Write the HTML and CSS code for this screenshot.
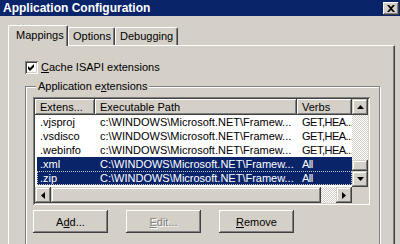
FILE: index.html
```html
<!DOCTYPE html>
<html>
<head>
<meta charset="utf-8">
<link rel="stylesheet" href="styles.css">
</head>
<body>
<div class="titlebar">
  <span class="title">Application Configuration</span>
  <span class="close"><svg width="8" height="7" viewBox="0 0 8 7"><path d="M0 0h2l2 2 2-2h2L5 3.5 8 7H6L4 5 2 7H0l3-3.5z" fill="#000"/></svg></span>
</div>
<div class="content">
  <div class="tabs">
    <div class="tab active t1">Mappings</div>
    <div class="tab t2">Options</div>
    <div class="tab t3">Debugging</div>
  </div>
  <div class="panel">
    <div class="check">
      <span class="box"><svg width="7" height="7" viewBox="0 0 7 7"><path d="M0 2L2 4L6 0V3L2 7L0 5Z" fill="#000"/></svg></span>
      <span class="check-label"><u>C</u>ache ISAPI extensions</span>
    </div>
    <div class="group">
      <div class="group-label">Application e<u>x</u>tensions</div>
      <div class="listview">
        <div class="lv-grid">
          <div class="lv-main">
            <div class="lv-header">
              <div class="hcell">Extens...</div>
              <div class="hcell">Executable Path</div>
              <div class="hcell">Verbs</div>
            </div>
            <div class="lv-rows">
              <div class="row"><span class="c1">.vjsproj</span><span class="c2">c:\WINDOWS\Microsoft.NET\Framew...</span><span class="c3">GET,HEA...</span></div>
              <div class="row"><span class="c1">.vsdisco</span><span class="c2">c:\WINDOWS\Microsoft.NET\Framew...</span><span class="c3">GET,HEA...</span></div>
              <div class="row"><span class="c1">.webinfo</span><span class="c2">c:\WINDOWS\Microsoft.NET\Framew...</span><span class="c3">GET,HEA...</span></div>
              <div class="row sel"><span class="c1">.xml</span><span class="c2">C:\WINDOWS\Microsoft.NET\Framew...</span><span class="c3">All</span></div>
              <div class="row sel focus"><span class="c1">.zip</span><span class="c2">C:\WINDOWS\Microsoft.NET\Framew...</span><span class="c3">All</span></div>
            </div>
          </div>
          <div class="vscroll">
            <div class="sbtn"><svg width="7" height="4" viewBox="0 0 7 4"><path d="M3.5 0L7 4H0Z" fill="#000"/></svg></div>
            <div class="track"></div>
            <div class="thumb vthumb"></div>
            <div class="sbtn"><svg width="7" height="4" viewBox="0 0 7 4"><path d="M0 0H7L3.5 4Z" fill="#000"/></svg></div>
          </div>
          <div class="hscroll">
            <div class="sbtn"><svg width="4" height="7" viewBox="0 0 4 7"><path d="M0 3.5L4 0V7Z" fill="#000"/></svg></div>
            <div class="thumb hthumb"></div>
            <div class="track"></div>
            <div class="sbtn"><svg width="4" height="7" viewBox="0 0 4 7"><path d="M0 0L4 3.5L0 7Z" fill="#000"/></svg></div>
          </div>
          <div class="corner"></div>
        </div>
      </div>
      <div class="buttons">
        <div class="btn">A<u>d</u>d...</div>
        <div class="btn disabled"><u>E</u>dit...</div>
        <div class="btn"><u>R</u>emove</div>
      </div>
    </div>
  </div>
</div>
</body>
</html>
```
FILE: styles.css
```css
* { box-sizing: border-box; }
body {
  margin: 0;
  width: 400px;
  height: 244px;
  overflow: hidden;
  background: #d4d0c8;
  font: 11px "Liberation Sans", Arial, sans-serif;
  color: #000;
}
u { text-decoration: underline; text-underline-offset: 1px; }

.titlebar {
  height: 16px;
  background: #0a246a;
  display: flex;
  align-items: center;
  justify-content: space-between;
  padding: 0 1px 0 3px;
}
.title { color: #fff; font-weight: bold; font-size: 12px; line-height: 14px; }
.close {
  width: 16px;
  height: 13px;
  background: #d4d0c8;
  display: flex;
  align-items: center;
  justify-content: center;
  box-shadow: inset -1px -1px #404040, inset 1px 1px #fff, inset -2px -2px #808080;
}

.content { padding: 9px 0 0 8px; }
.tabs { display: flex; align-items: flex-end; height: 20px; }
.tab {
  height: 18px;
  border-top: 1px solid #fff;
  border-left: 1px solid #fff;
  border-right: 1px solid #404040;
  box-shadow: inset -1px 0 #808080;
  border-radius: 2px 2px 0 0;
  line-height: 13px;
  padding-top: 2px;
  background: #d4d0c8;
}
.tab.active {
  height: 21px;
  margin-bottom: -1px;
  position: relative;
  z-index: 1;
  padding-top: 3px;
}
.t1 { width: 60px; padding-left: 7px; }
.t2 { width: 47px; padding-left: 4px; }
.t3 { width: 63px; padding-left: 4px; }

.panel {
  width: 387px;
  height: 199px;
  overflow: hidden;
  border-top: 1px solid #fff;
  border-left: 1px solid #fff;
  border-right: 1px solid #404040;
  box-shadow: inset -1px 0 #808080;
  padding: 15px 0 0 16px;
}
.check { display: flex; align-items: center; height: 13px; }
.box {
  width: 13px;
  height: 13px;
  background: #fff;
  box-shadow: inset 1px 1px #808080, inset -1px -1px #fff, inset 2px 2px #404040, inset -2px -2px #d4d0c8;
  display: flex;
  align-items: center;
  justify-content: center;
}
.check-label { margin-left: 3px; line-height: 13px; }

.group {
  margin-top: 12px;
  width: 355px;
  height: 180px;
  border: 1px solid #808080;
  box-shadow: inset 1px 1px #fff, 1px 1px #fff;
  padding: 0 9px 0 7px;
}
.group-label {
  width: max-content;
  margin: -7px 0 0 3px;
  padding: 0 2px;
  line-height: 13px;
  background: #d4d0c8;
}

.listview {
  margin-top: 4px;
  width: 337px;
  height: 108px;
  padding: 2px;
  background: #fff;
  box-shadow: inset 1px 1px #808080, inset -1px -1px #fff, inset 2px 2px #404040, inset -2px -2px #d4d0c8;
}
.lv-grid {
  display: grid;
  grid-template-columns: 317px 16px;
  grid-template-rows: 88px 16px;
}
.lv-main { overflow: hidden; }
.lv-header { display: grid; grid-template-columns: 60px 202px 55px; height: 16px; }
.hcell {
  background: #d4d0c8;
  line-height: 16px;
  padding-left: 5px;
  white-space: nowrap;
  overflow: hidden;
  box-shadow: inset -1px -1px #404040, inset 1px 1px #fff, inset -2px -2px #808080;
}
.lv-rows { padding-left: 2px; }
.row {
  display: grid;
  grid-template-columns: 58px 202px 55px;
  height: 14px;
  line-height: 14px;
  white-space: nowrap;
}
.row span { overflow: hidden; }
.c1 { padding-left: 3px; }
.c2, .c3 { padding-left: 5px; }
.c3 { letter-spacing: -0.5px; }
.row.sel { background: #0a246a; color: #fff; }
.row.focus { outline: 1px dotted #c8c8c8; outline-offset: -1px; }

.vscroll { display: flex; flex-direction: column; }
.hscroll { display: flex; }
.sbtn {
  width: 16px;
  height: 16px;
  flex: none;
  background: #d4d0c8;
  display: flex;
  align-items: center;
  justify-content: center;
  box-shadow: inset -1px -1px #404040, inset 1px 1px #d4d0c8, inset -2px -2px #808080, inset 2px 2px #fff;
}
.track {
  flex: 1;
  background-color: #fff;
  background-image: repeating-conic-gradient(#d4d0c8 0 25%, #fff 0 50%);
  background-size: 2px 2px;
}
.thumb {
  flex: none;
  background: #d4d0c8;
  box-shadow: inset -1px -1px #404040, inset 1px 1px #d4d0c8, inset -2px -2px #808080, inset 2px 2px #fff;
}
.vthumb { height: 11px; }
.hthumb { width: 270px; }
.corner { background: #d4d0c8; }

.buttons { display: flex; gap: 18px; margin-top: 5px; }
.btn {
  width: 75px;
  height: 23px;
  display: flex;
  align-items: center;
  justify-content: center;
  background: #d4d0c8;
  box-shadow: inset -1px -1px #404040, inset 1px 1px #fff, inset -2px -2px #808080;
}
.btn.disabled { color: #808080; text-shadow: 1px 1px #fff; }
```
